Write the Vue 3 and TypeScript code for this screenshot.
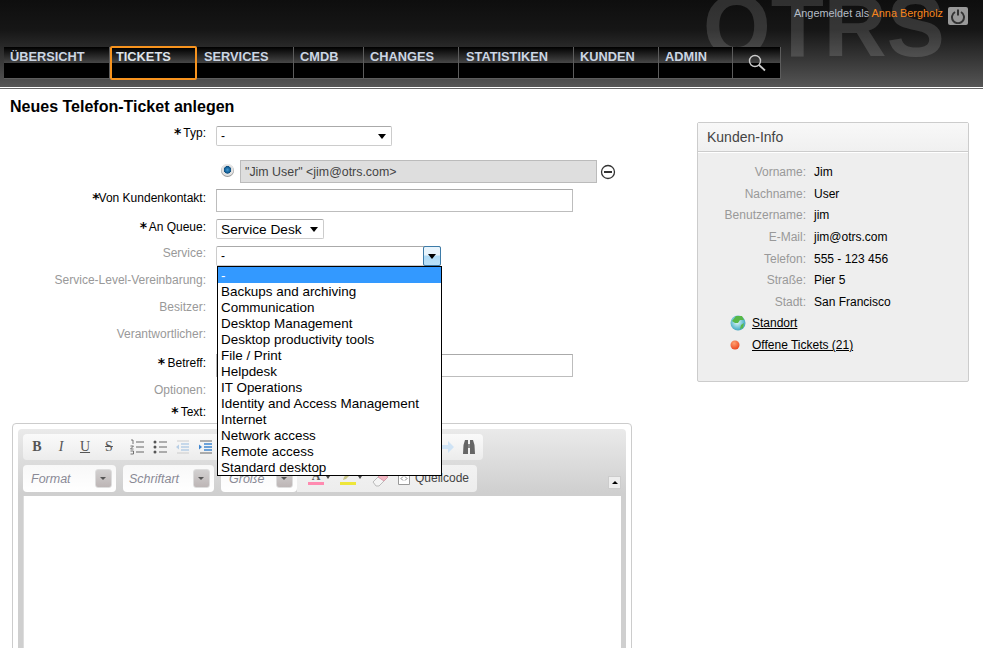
<script setup lang="ts">
const nav = [
  { label: 'ÜBERSICHT', w: 106, p: 6 },
  { label: 'TICKETS', w: 87, p: 4, active: true },
  { label: 'SERVICES', w: 97, p: 7 },
  { label: 'CMDB', w: 70, p: 6 },
  { label: 'CHANGES', w: 95, p: 6 },
  { label: 'STATISTIKEN', w: 115, p: 7 },
  { label: 'KUNDEN', w: 85, p: 6 },
  { label: 'ADMIN', w: 74, p: 6 },
]
const services = ['-', 'Backups and archiving', 'Communication', 'Desktop Management', 'Desktop productivity tools', 'File / Print', 'Helpdesk', 'IT Operations', 'Identity and Access Management', 'Internet', 'Network access', 'Remote access', 'Standard desktop']
const info = [
  ['Vorname:', 'Jim'], ['Nachname:', 'User'], ['Benutzername:', 'jim'], ['E-Mail:', 'jim@otrs.com'],
  ['Telefon:', '555 - 123 456'], ['Straße:', 'Pier 5'], ['Stadt:', 'San Francisco'],
]
</script>

<template>
  <div class="page">
    <header class="header">
      <div class="watermark">OTRS</div>
      <div class="user">
        <span class="user-text">Angemeldet als <em>Anna Bergholz</em></span>
        <span class="power">
          <svg width="16" height="16" viewBox="0 0 16 16"><path d="M5 4a6 6 0 1 0 6 0" fill="none" stroke="#333" stroke-width="2"/><path d="M8 1.500v6" stroke="#333" stroke-width="2"/></svg>
        </span>
      </div>
      <nav class="nav">
        <div v-for="n in nav" :key="n.label" class="nav-item" :class="{ active: n.active }" :style="{ width: n.w + 'px', paddingLeft: n.p + 'px' }">
          <span>{{ n.label }}</span>
        </div>
        <div class="nav-item search">
          <svg width="20" height="20" viewBox="0 0 20 20"><circle cx="8" cy="8" r="5.500" fill="none" stroke="#ccc" stroke-width="1.400"/><path d="M12 12l6 5.500" stroke="#ccc" stroke-width="1.800"/></svg>
        </div>
      </nav>
    </header>

    <main class="content">
      <section class="left">
        <h1>Neues Telefon-Ticket anlegen</h1>
        <div class="form">
          <div class="row h-typ">
            <label class="req"><i>*</i> Typ:</label>
            <div class="select typ"><span>-</span><b class="caret"></b></div>
          </div>
          <div class="row h-radio">
            <label></label>
            <div class="contact">
              <span class="radio"></span>
              <div class="contact-box">"Jim User" &lt;jim@otrs.com&gt;</div>
              <svg class="minus" width="16" height="16" viewBox="0 0 16 16"><circle cx="8" cy="8" r="6.500" fill="none" stroke="#333" stroke-width="1.300"/><path d="M4 8h8" stroke="#333" stroke-width="2"/></svg>
            </div>
          </div>
          <div class="row h-von">
            <label class="req"><i>*</i>Von Kundenkontakt:</label>
            <div class="input"></div>
          </div>
          <div class="row h-queue">
            <label class="req"><i>*</i> An Queue:</label>
            <div class="select queue"><span>Service Desk</span><b class="caret"></b></div>
          </div>
          <div class="row h-service">
            <label>Service:</label>
            <div class="select service">
              <span>-</span>
              <div class="arrow-btn"><b class="caret"></b></div>
            </div>
            <ul class="dropdown">
              <li v-for="(s, i) in services" :key="s" :class="{ sel: i === 0 }">{{ s }}</li>
            </ul>
          </div>
          <div class="row h-plain"><label>Service-Level-Vereinbarung:</label></div>
          <div class="row h-plain"><label>Besitzer:</label></div>
          <div class="row h-plain"><label>Verantwortlicher:</label></div>
          <div class="row h-betreff">
            <label class="req"><i>*</i> Betreff:</label>
            <div class="input"></div>
          </div>
          <div class="row h-opt"><label>Optionen:</label></div>
          <div class="row h-text"><label class="req"><i>*</i> Text:</label></div>
        </div>

        <div class="editor">
          <div class="editor-inner">
            <div class="bar one">
              <div class="group top">
                <span class="tb b">B</span>
                <span class="tb it">I</span>
                <span class="tb u">U</span>
                <span class="tb s">S</span>
                <svg class="ic" width="16" height="16" viewBox="0 0 16 16"><path d="M7 3h8M7 8h8M7 13h8" stroke="#666"/><path d="M2 1h2v4M1.500 7h3l-3 3h3M1.500 12h3v3h-3" fill="none" stroke="#555" stroke-width=".8"/></svg>
                <svg class="ic" width="16" height="16" viewBox="0 0 16 16"><path d="M7 3h8M7 8h8M7 13h8" stroke="#666"/><circle cx="3" cy="3" r="1.500" fill="#555"/><circle cx="3" cy="8" r="1.500" fill="#555"/><circle cx="3" cy="13" r="1.500" fill="#555"/></svg>
                <svg class="ic" width="16" height="16" viewBox="0 0 16 16"><path d="M2 2h12M2 14h12" stroke="#ccc"/><path d="M6 5h8M6 8h8M6 11h8" stroke="#b6cee6" stroke-width="1.500"/><path d="M4 5.500L1 8l3 2.500z" fill="#b8cfe6"/></svg>
                <svg class="ic" width="16" height="16" viewBox="0 0 16 16"><path d="M2 2h12M2 14h12" stroke="#666"/><path d="M6 5h8M6 8h8M6 11h8" stroke="#3f86d0" stroke-width="1.500"/><path d="M1 5.500L4 8l-3 2.500z" fill="#3f86d0"/></svg>
                <span class="top-spacer"></span>
                <svg class="redo" width="14" height="14" viewBox="0 0 14 14"><path d="M1 5h6V1l6 6-6 6V9H1z" fill="#cfe3f5"/></svg>
                <svg class="binoc" width="16" height="16" viewBox="0 0 16 16"><path d="M2 15l.5-9L4 1h3v14zM14 15l-.5-9L12 1H9v14z" fill="#666"/><path d="M7 5h2v4H7z" fill="#888"/></svg>
              </div>
            </div>
            <div class="bar two">
              <div class="combo c1"><em>Format</em><span class="combo-btn"></span></div>
              <div class="combo c2"><em>Schriftart</em><span class="combo-btn"></span></div>
              <div class="combo c3"><em>Größe</em><span class="combo-btn"></span></div>
              <div class="group tools">
                <span class="color"><span class="letter">A</span><i class="pink"></i></span>
                <b class="mini"></b>
                <span class="color mark">
                  <svg width="16" height="11" viewBox="0 0 16 11"><path d="M3 10l1-3 6-6 2 2-6 6z" fill="#c9c68a"/></svg>
                  <i class="yellow"></i>
                </span>
                <b class="mini"></b>
                <svg class="eraser" width="18" height="18" viewBox="0 0 18 18"><path d="M1 12l9-9 6 4-9 9H4z" fill="#f4f4f4" stroke="#bbb"/><path d="M10 3l6 4-4 4-6-4z" fill="#f3b8c4" stroke="#d8a0ac"/></svg>
                <svg class="src" width="12" height="13" viewBox="0 0 12 13"><path d="M.5.5h11v12H.5z" fill="#fff" stroke="#999"/><path d="M5 4.500L3 6.500 5 8.500M7 4.500l2 2-2 2" fill="none" stroke="#666" stroke-width=".8"/></svg>
                <span class="src-label">Quellcode</span>
              </div>
              <span class="collapse"><b></b></span>
            </div>
            <div class="area"></div>
          </div>
        </div>
      </section>

      <aside class="panel">
        <h2>Kunden-Info</h2>
        <div class="panel-body">
          <div v-for="r in info" :key="r[0]" class="info-row">
            <span class="k">{{ r[0] }}</span><span class="v">{{ r[1] }}</span>
          </div>
          <div class="link-row first">
            <svg width="16" height="16" viewBox="0 0 16 16">
              <defs><radialGradient id="globe" cx=".45" cy=".45" r=".7"><stop offset="0" stop-color="#e4f8fa"/><stop offset=".6" stop-color="#62bccf"/><stop offset="1" stop-color="#2a8fae"/></radialGradient></defs>
              <circle cx="8" cy="8" r="7.500" fill="url(#globe)"/>
              <path d="M2 6l4-5 6 0 2 4-4 0-2 3-3 0zM11 10l3-2-1 5-3 1z" fill="#58b848"/>
            </svg>
            <a>Standort</a>
          </div>
          <div class="link-row">
            <svg width="16" height="16" viewBox="0 0 16 16">
              <defs><radialGradient id="red" cx=".4" cy=".3" r=".8"><stop offset="0" stop-color="#ffa070"/><stop offset="1" stop-color="#e83c14"/></radialGradient></defs>
              <circle cx="5" cy="8" r="4.500" fill="url(#red)"/>
            </svg>
            <a>Offene Tickets (21)</a>
          </div>
        </div>
      </aside>
    </main>
  </div>
</template>

<style>
html, body { margin: 0; background: #fff; overflow: hidden; }
</style>

<style scoped>
.page { width: 983px; height: 648px; overflow: hidden; font-family: "Liberation Sans", Arial, sans-serif; font-size: 12px; color: #000; background: #fff; position: relative; }

.header { position: relative; box-sizing: border-box; height: 89px; background: linear-gradient(#0e0e0e 0, #161616 30px, #555 87px); border-bottom: 1px solid #666; padding-top: 47px; overflow: hidden; }
.header::after { content: ""; position: absolute; left: 0; right: 0; bottom: 0; height: 1px; background: #fff; }
.watermark { position: absolute; left: 703px; top: -24px; font-size: 87px; line-height: 100px; font-weight: bold; color: rgba(255,255,255,.14); }
.user { position: absolute; right: 15px; top: 7px; display: flex; align-items: flex-start; gap: 5px; color: #b4bcc6; font-size: 10.900px; }
.user-text { line-height: 13px; }
.user em { font-style: normal; color: #f7861e; }
.power { width: 20px; height: 18px; border-radius: 2px; background: #999; display: flex; align-items: center; justify-content: center; }

.nav { display: flex; align-items: flex-start; margin-left: 4px; position: relative; height: 32px; }
.nav-item { box-sizing: border-box; height: 32px; background: linear-gradient(#000 0, #474747 16px, #000 16px); border-right: 1px solid #5c5c5c; border-bottom: 1px solid #5c5c5c; color: #ccd6e4; font-size: 12.800px; font-weight: bold; line-height: 19px; white-space: nowrap; }
.nav-item.active { height: 34px; margin-top: -1px; border: 2px solid #f7931e; border-radius: 2px; line-height: 17px; color: #dfe4ea; background: linear-gradient(#000 0, #474747 15px, #000 15px); }
.search { width: 48px; display: flex; justify-content: center; padding: 6px 0 0; }

.content { display: flex; align-items: flex-start; }
.left { width: 640px; flex: none; position: relative; }
h1 { margin: 0; padding: 9px 0 0 10px; font-size: 16px; line-height: 18px; font-weight: bold; height: 28px; }
.row { display: flex; position: relative; }
.row label { width: 206px; flex: none; text-align: right; color: #999; font-size: 12px; line-height: 14px; margin-right: 10px; }
.row label.req { color: #000; }
.row label i { font-family: "DejaVu Sans", sans-serif; font-style: normal; font-size: 14px; line-height: 10px; font-weight: bold; position: relative; top: 1px; left: 1px; }
.h-typ { height: 34px; }
.h-radio { height: 29px; }
.h-von { height: 30px; }
.h-queue { height: 27px; }
.h-service { height: 27px; }
.h-plain { height: 27px; }
.h-betreff { height: 29px; }
.h-opt { height: 22px; }
.h-text { height: 11px; }
.h-betreff label { padding-top: 2px; }
.h-von label { padding-top: 2px; }
.h-queue label { padding-top: 1px; }

.select { box-sizing: border-box; height: 20px; border: 1px solid #ccc; border-top-color: #aaa; border-radius: 2px; background: #fff; display: flex; align-items: center; justify-content: space-between; padding: 0 5px 0 4px; }
.typ { width: 176px; }
.queue { width: 108px; font-size: 13.700px; }
.service { width: 225px; padding: 0 0 0 4px; position: relative; }
.caret { width: 0; height: 0; border: 4px solid transparent; border-top: 5px solid #000; border-bottom: 0; display: block; }
.arrow-btn { width: 18px; height: 20px; margin: 0 -1px 0 0; border: 1px solid #3d7ba8; border-radius: 2px; box-sizing: border-box; background: linear-gradient(#e8f4fc, #e8f4fc 45%, #aedaf6 50%, #b9e0f8); display: flex; align-items: center; justify-content: center; flex: none; }
.contact { display: flex; align-items: center; height: 23px; }
.radio { width: 13px; height: 13px; border-radius: 50%; margin: 0 6px 2px 5px; background: radial-gradient(circle at 50% 45%, #4a9ad0 0, #1c6fa8 2px, #0f4e80 3.500px, #dcdcdc 4px, #e6e6e6 5.500px, #999 6.500px); flex: none; }
.contact-box { box-sizing: border-box; width: 357px; height: 23px; background: #dedede; border: 1px solid #bbb; padding-left: 4px; line-height: 22px; color: #444; font-size: 12.400px; }
.minus { margin-left: 3px; }
.input { box-sizing: border-box; width: 357px; height: 23px; border: 1px solid #bdbdbd; border-top-color: #aaa; background: #fff; }

.dropdown { position: absolute; left: 217px; top: 20px; width: 225px; box-sizing: border-box; margin: 0; padding: 0; list-style: none; background: #fff; border: 1px solid #000; z-index: 5; font-size: 13.450px; }
.dropdown li { height: 16px; line-height: 17px; padding-left: 3px; color: #000; white-space: nowrap; }
.dropdown li.sel { background: #3399ff; color: #fff; }

.editor { position: absolute; left: 12px; top: 334px; width: 620px; height: 300px; box-sizing: border-box; border: 1px solid #ccc; border-radius: 4px; padding: 5px 5px 0 5px; background: #fff; }
.editor-inner { border-radius: 4px 4px 0 0; height: 100%; width: 608px; box-sizing: border-box; background: linear-gradient(#eaeaea, #cfcfcf 64px); }
.bar { display: flex; align-items: flex-start; }
.one { height: 36px; padding: 5px 0 0 5px; box-sizing: border-box; }
.top { width: 460px; height: 26px; background: linear-gradient(#fafafa, #ececec); border-radius: 4px; display: flex; align-items: center; padding-left: 8px; box-sizing: border-box; }
.tb { width: 12px; margin-right: 12px; font-family: "Liberation Serif", serif; font-size: 14px; color: #555; text-align: center; flex: none; }
.tb.b { font-weight: bold; }
.tb.it { font-style: italic; }
.tb.u { text-decoration: underline; }
.tb.s { text-decoration: line-through; margin-right: 14px; }
.ic { margin-right: 7px; flex: none; }
.top-spacer { flex: 1; }
.redo { margin-right: 6px; }
.binoc { margin-right: 6px; }
.two { height: 31px; padding-left: 5px; box-sizing: border-box; position: relative; }
.combo { height: 27px; background: linear-gradient(#f8f8f8, #fff); border-radius: 4px; box-sizing: border-box; display: flex; align-items: center; justify-content: space-between; padding: 0 4px 0 8px; margin-right: 7px; color: #8a8a96; }
.combo em { font-size: 12.500px; }
.c1 { width: 93px; }
.c2 { width: 91px; padding-left: 6px; }
.c3 { width: 76px; margin-right: 0; }
.combo-btn { width: 17px; height: 19px; border-radius: 3px; background: linear-gradient(#d2d0d0, #bdb6b6); border: 1px solid #ddd; box-sizing: border-box; position: relative; }
.combo-btn::after { content: ""; position: absolute; left: 4px; top: 7px; border: 3px solid transparent; border-top: 3px solid #555; }
.tools { width: 180px; height: 27px; background: linear-gradient(#f2f2f2, #ededed); border-radius: 0 4px 4px 0; display: flex; align-items: center; padding-left: 11px; box-sizing: border-box; }
.color { width: 16px; height: 18px; position: relative; display: block; text-align: center; flex: none; }
.letter { font-family: "Liberation Serif", serif; font-size: 12px; font-weight: bold; color: #555; line-height: 12px; display: block; }
.color svg { display: block; }
.color i { position: absolute; left: 0; right: 0; bottom: 3px; height: 3px; }
.pink { background: #ff8ab0; }
.yellow { background: #eee63a; }
.mini { border: 2px solid transparent; border-top: 3px solid #444; margin: 0 10px 0 2px; display: block; flex: none; }
.eraser { margin-right: 8px; flex: none; }
.src { margin-right: 5px; flex: none; }
.src-label { font-size: 12px; color: #444; transform: translateY(-1px); }
.collapse { position: absolute; left: 590px; top: 11px; width: 13px; height: 13px; background: #eee; border: 1px solid #ccc; box-sizing: border-box; display: flex; align-items: center; justify-content: center; }
.collapse b { border: 3px solid transparent; border-bottom: 3px solid #000; border-top: 0; display: block; }
.area { margin-left: 5px; width: 598px; height: 220px; background: #fff; border-left: 1px solid #ddd; box-sizing: border-box; }

.panel { position: absolute; left: 697px; top: 122px; width: 272px; height: 260px; box-sizing: border-box; border: 1px solid #ccc; border-radius: 2px; background: #eee; }
.panel h2 { margin: 0; height: 29px; box-sizing: border-box; border-bottom: 1px solid #ccc; padding-left: 9px; font-size: 14px; font-weight: normal; line-height: 28px; color: #444; background: linear-gradient(#f8f8f8, #f0f0f0); box-shadow: 0 1px 0 #fff; }
.panel-body { padding-top: 10px; }
.info-row { display: flex; height: 21.700px; line-height: 21px; }
.k { width: 108px; text-align: right; color: #999; margin-right: 8px; flex: none; }
.link-row { display: flex; align-items: center; height: 22px; padding-left: 32px; }
.link-row.first { margin-top: -2px; }
.link-row svg { margin-right: 6px; }
.link-row a { color: #000; text-decoration: underline; }
</style>
